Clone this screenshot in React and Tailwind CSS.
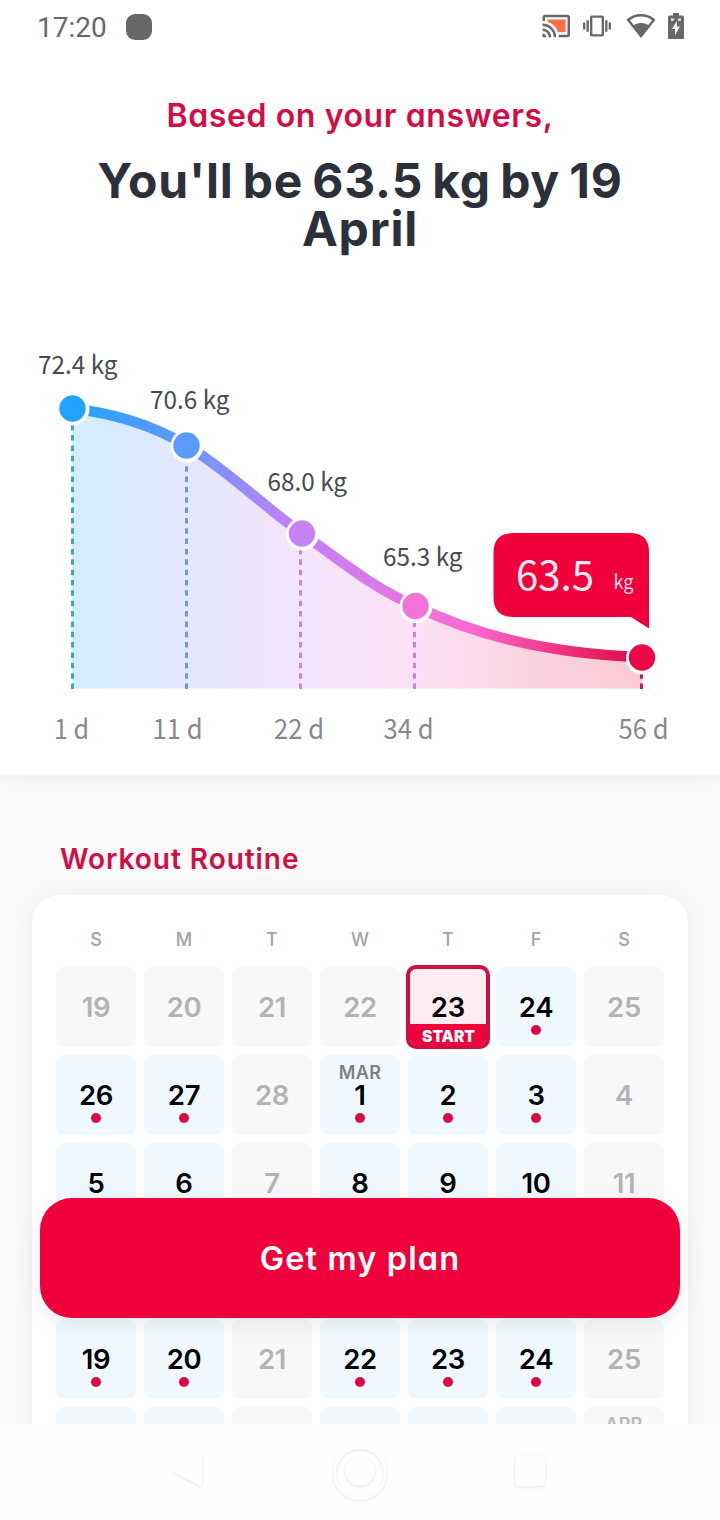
const points = [
  { x: 72.5, y: 408.5, dashX: 72.5, day: "1 d", dayX: 54, dayW: 35, weight: "72.4 kg", labelX: 38, labelY: 373.5, color: "#22a3ff", dash: "#4a9fc9" },
  { x: 186.5, y: 445.5, dashX: 186.5, day: "11 d", dayX: 152.5, dayW: 50, weight: "70.6 kg", labelX: 150, labelY: 409, color: "#5b9aff", dash: "#6c9ad2" },
  { x: 302, y: 533.5, dashX: 300.5, day: "22 d", dayX: 274, dayW: 50, weight: "68.0 kg", labelX: 267.5, labelY: 491, color: "#c783f4", dash: "#bd8bd9" },
  { x: 415.5, y: 606, dashX: 414.5, day: "34 d", dayX: 383.5, dayW: 50, weight: "65.3 kg", labelX: 383, labelY: 565.5, color: "#f273da", dash: "#d77fce" },
  { x: 642, y: 657.5, dashX: 641.5, day: "56 d", dayX: 618.5, dayW: 50, color: "#ec0547", dash: "#b32450" },
];

const curve =
  "C112 413 152 425 186 445 C226 469 262 505 301.5 533 C340 560 374 589 415.5 606 C480 638 560 654 642 657";

const weekdays = ["S", "M", "T", "W", "T", "F", "S"];

// the fourth week sits fully under the button, the last one is cut below its month label
const weeks = [
  [{ n: 19, off: true }, { n: 20, off: true }, { n: 21, off: true }, { n: 22, off: true }, { n: 23, start: true }, { n: 24 }, { n: 25, off: true }],
  [{ n: 26 }, { n: 27 }, { n: 28, off: true }, { n: 1, month: "MAR" }, { n: 2 }, { n: 3 }, { n: 4, off: true }],
  [{ n: 5 }, { n: 6 }, { n: 7, off: true }, { n: 8 }, { n: 9 }, { n: 10 }, { n: 11, off: true }],
  [{}, {}, { off: true }, {}, {}, {}, { off: true }],
  [{ n: 19 }, { n: 20 }, { n: 21, off: true }, { n: 22 }, { n: 23 }, { n: 24 }, { n: 25, off: true }],
  [{}, {}, { off: true }, {}, {}, {}, { off: true, month: "APR" }],
];

const StatusBar = () => (
  <div className="flex h-[53px] items-center pl-[37px] pr-9 text-[#686868]">
    <span className="pt-[3px] font-['Roboto',sans-serif] text-[28px] leading-none">17:20</span>
    <div className="ml-[19px] size-[26px] rounded-[9px] bg-[#686868]"></div>
    <div className="mb-[2px] ml-auto flex items-center">
      {/* cast */}
      <svg className="h-[30px] w-[30.5px]" viewBox="0 0 24 24" fill="currentColor">
        <path d="M21 3H3c-1.1 0-2 .9-2 2v3h2V5h18v14h-7v2h7c1.1 0 2-.9 2-2V5c0-1.1-.9-2-2-2zM1 18v3h3c0-1.66-1.34-3-3-3zm0-4v2c2.76 0 5 2.24 5 5h2c0-3.87-3.13-7-7-7zm0-4v2c4.97 0 9 4.03 9 9h2c0-6.08-4.93-11-11-11z" />
        <path fill="#ff6e48" d="M19.500 6.700H5v1.930c3.960 1.280 7.090 4.410 8.370 8.370H19.500V6.700z" />
      </svg>
      {/* vibrate */}
      <svg className="ml-3 size-7" viewBox="0 0 24 24" fill="currentColor">
        <path d="M0 15h2V9H0v6zm3 2h2V7H3v10zm19-8v6h2V9h-2zm-3 8h2V7h-2v10zM16.5 3h-9C6.67 3 6 3.67 6 4.5v15c0 .83.67 1.5 1.5 1.5h9c.83 0 1.5-.67 1.5-1.5v-15c0-.83-.67-1.5-1.5-1.5zM16 19H8V5h8v14z" />
      </svg>
      {/* wifi */}
      <svg className="ml-[15px] h-[26px] w-[30px]" viewBox="0 0 30 26">
        <path d="M2.2 7C9.5 .6 20.5 .6 27.8 7L15 23Z" fill="none" stroke="currentColor" strokeWidth="2.5" />
        <path d="M6.500 13.200c4.800-4.400 12.200-4.400 17 0L15 24Z" fill="currentColor" />
      </svg>
      {/* battery */}
      <svg className="ml-3 h-[26px] w-4" viewBox="0 0 16 26">
        <path d="M5 0h6v2.6h3.4c.9 0 1.6.7 1.6 1.6v20.2c0 .9-.7 1.6-1.6 1.6H1.6C.7 26 0 25.3 0 24.4V4.2C0 3.3.7 2.6 1.6 2.6H5Z" fill="currentColor" />
        <path d="M3 5.500h3.500L5.500 8H3ZM10 5.500h3V8h-3Z" fill="#ddd" />
        <path d="M8.800 8 4 16h3.100v6L12 13.500H8.800Z" fill="#fff" />
      </svg>
    </div>
  </div>
);

const WeightChart = () => (
  <svg className="block h-[445px] w-[720px]" viewBox="0 330 720 445">
    <defs>
      <linearGradient id="line" gradientUnits="userSpaceOnUse" x1="72" y1="0" x2="642" y2="0">
        <stop offset="0" stopColor="#22a3ff" />
        <stop offset="0.2" stopColor="#6597fc" />
        <stop offset="0.38" stopColor="#bd82fb" />
        <stop offset="0.6" stopColor="#e876df" />
        <stop offset="0.7" stopColor="#fa69d0" />
        <stop offset="0.87" stopColor="#f12e79" />
        <stop offset="1" stopColor="#d90d43" />
      </linearGradient>
      <linearGradient id="area" gradientUnits="userSpaceOnUse" x1="72" y1="0" x2="642" y2="0">
        <stop offset="0" stopColor="#d1edff" />
        <stop offset="0.2" stopColor="#e3e7fd" />
        <stop offset="0.4" stopColor="#f4e4fd" />
        <stop offset="0.6" stopColor="#fce1f6" />
        <stop offset="0.8" stopColor="#fdd3e0" />
        <stop offset="1" stopColor="#fbcad6" />
      </linearGradient>
    </defs>

    <path d={`M72 408 ${curve} V688.5 H72 Z`} fill="url(#area)" />
    {points.map((p) => (
      <line
        key={p.x}
        x1={p.dashX}
        x2={p.dashX}
        y1="689"
        y2={p.y + 16}
        stroke={p.dash}
        strokeWidth="3"
        strokeDasharray="5.5 4.85"
      />
    ))}
    <path d={`M72 408.5 ${curve}`} fill="none" stroke="url(#line)" strokeWidth="10.5" />
    {points.map((p) => (
      <g key={p.x}>
        <circle cx={p.x + 0.5} cy={p.y + 0.5} r="16.5" fill="#fff" />
        <circle cx={p.x} cy={p.y} r="13.2" fill={p.color} />
      </g>
    ))}

    <g className="font-['Noto_Sans_CJK_SC',sans-serif]">
      {points.map((p) => (
        <g key={p.x}>
          {p.weight && (
            <text x={p.labelX} y={p.labelY} fontSize="24.5" fill="#484a51" textLength="79.5" lengthAdjust="spacingAndGlyphs">
              {p.weight}
            </text>
          )}
          <text x={p.dayX} y="738.5" fontSize="27.5" fill="#86898d" textLength={p.dayW} lengthAdjust="spacingAndGlyphs">
            {p.day}
          </text>
        </g>
      ))}
      <path
        d="M513 533H630Q649 533 649 552V628.5L631 617H513Q493.5 617 493.5 597V553Q493.5 533 513 533Z"
        fill="#ef003b"
      />
      <text x="516" y="589.5" fontSize="40" fill="#ffe8ef" textLength="78" lengthAdjust="spacingAndGlyphs">63.5</text>
      <text x="613.5" y="589" fontSize="20" fill="#ffd9e3" textLength="20" lengthAdjust="spacingAndGlyphs">kg</text>
    </g>
  </svg>
);

const DayCell = ({ day }) => {
  if (day.start) {
    return (
      <div className="relative -m-0.5 flex size-[84px] items-center justify-center overflow-hidden rounded-[10px] border-4 border-[#cf0f42] bg-[#ffecf1]">
        <span className="pt-[2px] text-[27.5px] font-semibold leading-none text-black">{day.n}</span>
        <span className="absolute inset-x-0 bottom-[-4px] flex h-[25px] items-center justify-center bg-[#ef003b] pl-px text-[15.5px] font-black leading-none text-white">
          START
        </span>
      </div>
    );
  }
  return (
    <div
      className={`relative flex size-20 items-center justify-center rounded-lg ${
        day.off ? "bg-[#f8f8f8] text-[#b3b3b3]" : "bg-[#f0f8ff] text-black"
      }`}
    >
      {day.month && (
        <span
          className={`absolute inset-x-0 top-[9px] text-center text-[18px] font-semibold leading-[18px] tracking-[0.3px] ${
            day.off ? "text-[#b9b9b9]" : "text-[#7c8084]"
          }`}
        >
          {day.month}
        </span>
      )}
      <span className="pt-[2px] text-[27.5px] font-semibold leading-none tracking-[-0.3px]">{day.n}</span>
      {!day.off && day.n && (
        <span className="absolute bottom-3 left-[35px] size-2.5 rounded-full bg-[#dc0a42]"></span>
      )}
    </div>
  );
};

const NavBar = () => (
  <div className="flex h-24 items-center justify-center bg-[#fefefe]">
    <svg className="h-24 w-[400px] drop-shadow-[0_1.5px_1.5px_rgba(0,0,0,0.11)]" viewBox="0 0 400 96" fill="#fefefe">
      <path d="M14 48 42 33V63Z" />
      <path fillRule="evenodd" d="M200 22a27 27 0 1 0 0 54 27 27 0 0 0 0-54Zm0 3a24 24 0 1 1 0 48 24 24 0 0 1 0-48Z" />
      <circle cx="200" cy="47" r="14.500" />
      <rect x="355" y="32" width="30" height="30" rx="3" />
    </svg>
  </div>
);

export default function App() {
  return (
    <div className="flex h-[1520px] w-[720px] flex-col overflow-hidden bg-white font-['Inter',sans-serif] [font-feature-settings:'cv11']">
      <div className="relative flex h-[1424px] flex-col overflow-hidden bg-[#fafafa]">
        {/* Forecast */}
        <div className="h-[775px] shrink-0 bg-white shadow-[0_2px_20px_rgba(0,0,0,0.06)]">
          <StatusBar />
          <div className="h-[277px] pt-[43px] text-center">
            <p className="text-[32px] font-semibold leading-[40px] tracking-[0.6px] text-[#d40d43]">
              Based on your answers,
            </p>
            <h1 className="mt-[21px] text-[48px] font-bold leading-[48px] tracking-[0.8px] text-[#2d303b] [word-spacing:-3px]">
              You'll be 63.5 kg by 19
              <br />
              April
            </h1>
          </div>
          <WeightChart />
        </div>

        {/* Routine */}
        <h2 className="ml-[60px] mt-[64px] text-[28px] font-semibold leading-[40px] tracking-[0.95px] text-[#d40d43]">
          Workout Routine
        </h2>
        <div className="mx-8 mt-4 rounded-t-[28px] bg-white px-6 pt-[32px] shadow-[0_0_32px_rgba(0,0,0,0.05)]">
          <div className="grid grid-cols-7 gap-2 text-center text-[18px] font-medium leading-[26px] text-[#a3a3a3]">
            {weekdays.map((d, i) => (
              <span key={i}>{d}</span>
            ))}
          </div>
          <div className="mt-[14px] grid grid-cols-7 gap-2">
            {weeks.flat().map((day, i) => (
              <DayCell key={i} day={day} />
            ))}
          </div>
        </div>

        <button className="absolute bottom-[106px] left-10 h-[120px] w-[640px] rounded-[32px] bg-[#ef003b] pt-[2px] text-[32.5px] font-semibold tracking-[1.1px] text-white shadow-[0_6px_24px_rgba(0,0,0,0.08)]">
          Get my plan
        </button>
      </div>
      <NavBar />
    </div>
  );
}
